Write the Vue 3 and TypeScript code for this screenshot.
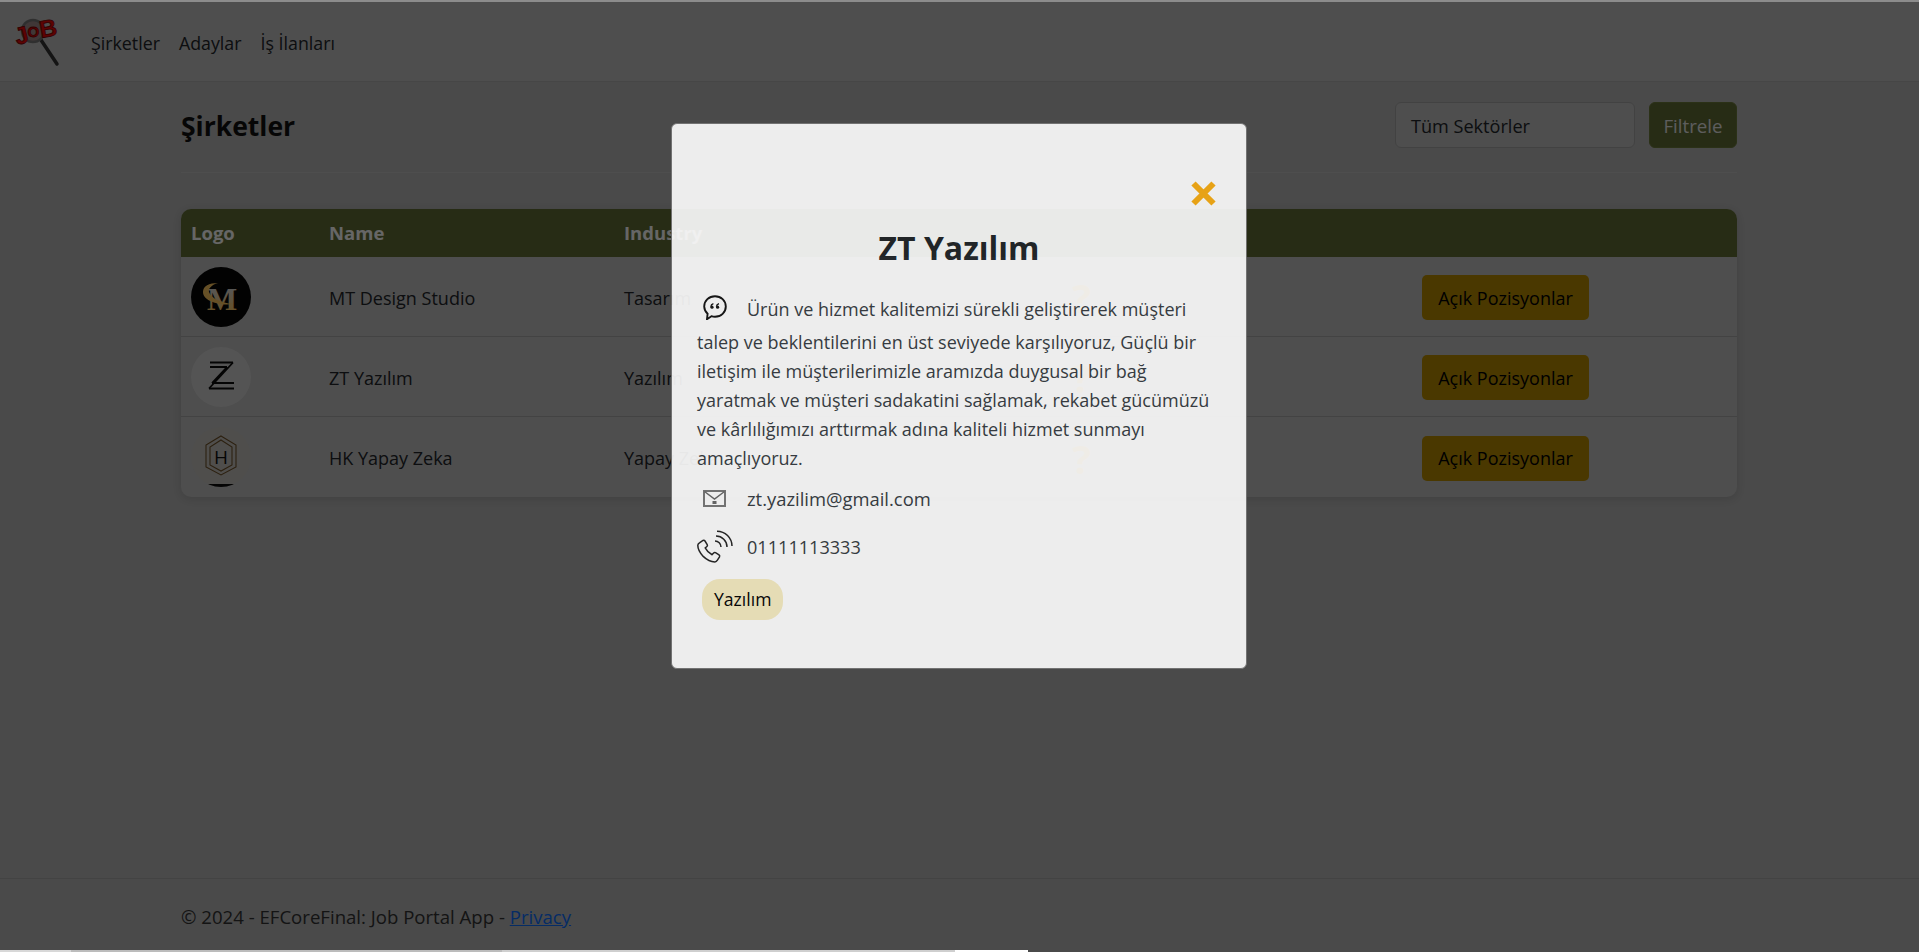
<template>
  <div class="page">
    <nav class="navbar">
      <svg class="brand" viewBox="14 16 48 52" width="48" height="52">
        <line x1="41" y1="41" x2="57" y2="65" stroke="#333" stroke-width="3.5" stroke-linecap="round" />
        <circle cx="33" cy="32" r="11" fill="#a08a8a" stroke="#777" stroke-width="2.5" />
        <text x="17" y="46" class="job" transform="rotate(-14 17 46)">J</text>
        <text x="27.500" y="38" class="job job-o">O</text>
        <text x="41" y="39" class="job" transform="rotate(-10 41 39)">B</text>
      </svg>
      <a v-for="link in links" :key="link" class="nav-link">{{ link }}</a>
    </nav>

    <main class="content">
      <div class="head-row">
        <h2 class="title">Şirketler</h2>
        <div class="filter">
          <div class="select">Tüm Sektörler</div>
          <button class="filter-btn">Filtrele</button>
        </div>
      </div>
      <hr class="rule" />
      <table class="companies">
        <colgroup>
          <col style="width: 138px" />
          <col style="width: 295px" />
          <col style="width: 448px" />
          <col style="width: 350px" />
          <col />
        </colgroup>
        <thead>
          <tr>
            <th>Logo</th>
            <th>Name</th>
            <th>Industry</th>
            <th></th>
            <th></th>
          </tr>
        </thead>
        <tbody>
          <tr v-for="c in companies" :key="c.name">
            <td class="logo-cell">
              <svg v-if="c.logo === 'mt'" class="logo" viewBox="0 0 60 60">
                <defs>
                  <linearGradient id="mt-grad" x1="0" y1="0" x2="0" y2="1">
                    <stop offset="0.2" stop-color="#d8d8d8" />
                    <stop offset="0.85" stop-color="#ffc860" />
                  </linearGradient>
                </defs>
                <circle cx="30" cy="30" r="30" fill="#060606" />
                <text x="31" y="43" text-anchor="middle" class="logo-m">M</text>
                <path d="M27 16c-9 0-15 3-15 9 0 9 16 14 30 12-12-1-22-6-24-12-1-3 2-7 9-9z" fill="#ffc860" />
              </svg>
              <svg v-else-if="c.logo === 'zt'" class="logo" viewBox="0 0 60 60">
                <circle cx="30" cy="30" r="30" fill="#d2d2d2" />
                <g fill="none" stroke="#0c0c0c" stroke-width="1.800">
                  <path d="M19 15.500h23M19 20h17" />
                  <path d="M42 15.500 18 41.500M36 20 21 36" />
                  <path d="M21 36h22M18 41.500h25" />
                </g>
              </svg>
              <svg v-else class="logo" viewBox="0 0 60 60">
                <clipPath id="hk-clip"><circle cx="30" cy="30" r="30" /></clipPath>
                <g clip-path="url(#hk-clip)">
                  <circle cx="30" cy="30" r="30" fill="#c6c3be" />
                  <path d="M30 9 45 18v22L30 48 15 40V18z" fill="none" stroke="#6e5128" stroke-width="1.100" />
                  <path d="M30 13 41 20v18L30 44 19 38V20z" fill="none" stroke="#6e5128" stroke-width="1.100" />
                  <text x="30" y="37" text-anchor="middle" class="logo-h">H</text>
                  <rect x="0" y="57" width="60" height="4" fill="#0c0c0c" />
                </g>
              </svg>
            </td>
            <td>{{ c.name }}</td>
            <td>{{ c.industry }}</td>
            <td class="hint">?</td>
            <td><button class="open-btn">Açık Pozisyonlar</button></td>
          </tr>
        </tbody>
      </table>
    </main>

    <footer class="footer">
      <div class="footer-inner">© 2024 - EFCoreFinal: Job Portal App - <a class="privacy">Privacy</a></div>
    </footer>

    <div class="backdrop">
      <div class="modal">
        <div class="close-row">
          <svg class="close" viewBox="0 0 25 25" width="25" height="25">
            <path d="M2.500 2.500l20 20M22.500 2.500l-20 20" stroke="#f9ac11" stroke-width="6" />
          </svg>
        </div>
        <h2 class="modal-title">{{ selected.name }}</h2>
        <p class="about">
          <svg class="quote" viewBox="0 0 24 25" width="24" height="25">
            <path d="M12 1.200c6 0 10.800 4.500 10.800 10.300S18 21.800 12 21.800c-1.300 0-2.500-.2-3.600-.6L4 24.200l.6-5.500A10.200 10.200 0 0 1 1.200 11.500C1.200 5.700 6 1.200 12 1.200z" fill="none" stroke="#111" stroke-width="1.900" />
            <circle cx="9" cy="12.200" r="1.600" fill="#111" />
            <circle cx="14.600" cy="12.200" r="1.600" fill="#111" />
            <path d="M7.800 11.800C7.900 10.200 8.800 9.200 10.400 8.700M13.400 11.800C13.500 10.200 14.400 9.200 16 8.700" fill="none" stroke="#111" stroke-width="1.300" />
          </svg>{{ selected.about }}
        </p>
        <div class="contact mail">
          <span class="slot">
            <svg viewBox="0 0 23 17" width="23" height="17">
              <rect x="1" y="1" width="21" height="15" fill="none" stroke="#777" stroke-width="2" />
              <path d="M1.500 1.500l10 7.500 10-7.500" fill="none" stroke="#666" stroke-width="1.500" />
              <rect x="9.500" y="11" width="4" height="3" fill="#666" />
            </svg>
          </span>
          <span>{{ selected.email }}</span>
        </div>
        <div class="contact phone">
          <span class="slot">
            <svg viewBox="0 0 36 35" width="36" height="35">
              <path d="M.8 15.300c0-1 1-2 2-2.600L6 10.500c.8-.4 1.500-.2 2 .5l2.200 3.600c.4.700.3 1.400-.3 1.900l-1.700 1.400c1.500 3 3.800 5.300 6.900 6.800l1.500-1.700c.5-.6 1.200-.7 1.900-.3l3.500 2.200c.7.500.9 1.200.5 2l-2.100 3.300c-.6 1-1.500 1.700-2.500 1.700-4 0-8.300-2.200-11.700-5.500C3 23 .8 19.300.8 15.300z" fill="none" stroke="#222" stroke-width="1.500" />
              <path d="M18 11a6 6 0 0 1 6 6M19 6a11 11 0 0 1 11 11M20 1.200A15 15 0 0 1 35 16" fill="none" stroke="#222" stroke-width="1.500" />
            </svg>
          </span>
          <span>{{ selected.phone }}</span>
        </div>
        <span class="tag">{{ selected.industry }}</span>
      </div>
    </div>

    <div class="top-line"></div>
    <div class="bottom-strip">
      <span v-for="s in strip" :key="s.color" :style="{ width: s.width + 'px', background: s.color }"></span>
    </div>
  </div>
</template>

<script setup lang="ts">
type Company = {
  name: string;
  industry: string;
  logo: "mt" | "zt" | "hk";
};

const links: string[] = ["Şirketler", "Adaylar", "İş İlanları"];

const companies: Company[] = [
  { name: "MT Design Studio", industry: "Tasarım", logo: "mt" },
  { name: "ZT Yazılım", industry: "Yazılım", logo: "zt" },
  { name: "HK Yapay Zeka", industry: "Yapay Zeka", logo: "hk" },
];

const selected = {
  name: "ZT Yazılım",
  industry: "Yazılım",
  email: "zt.yazilim@gmail.com",
  phone: "01111113333",
  about:
    "Ürün ve hizmet kalitemizi sürekli geliştirerek müşteri talep ve beklentilerini en üst seviyede karşılıyoruz, Güçlü bir iletişim ile müşterilerimizle aramızda duygusal bir bağ yaratmak ve müşteri sadakatini sağlamak, rekabet gücümüzü ve kârlılığımızı arttırmak adına kaliteli hizmet sunmayı amaçlıyoruz.",
};

const strip = [
  { width: 71, color: "#d8d8d8" },
  { width: 431, color: "#bcbcbc" },
  { width: 453, color: "#cfcfcf" },
  { width: 73, color: "#ffffff" },
];
</script>

<style>
html,
body {
  margin: 0;
  height: 100%;
  overflow: hidden;
}
</style>

<style scoped>
.page {
  position: relative;
  display: flex;
  flex-direction: column;
  height: 952px;
  overflow: hidden;
  background: #b8b8b8;
  color: #212529;
  font-family: "Open Sans", "Noto Sans", sans-serif;
  font-size: 18px;
}

.navbar {
  display: flex;
  align-items: center;
  height: 82px;
  box-sizing: border-box;
  padding-left: 14px;
  background: #c2c2c2;
  border-bottom: 1px solid #b0b0b0;
}

.brand {
  margin-right: 29px;
  overflow: visible;
}

.job {
  font-family: "Liberation Sans", sans-serif;
  font-weight: 700;
  font-size: 24px;
  fill: #e80808;
  stroke: #700;
  stroke-width: 0.8;
}

.job-o {
  font-size: 15px;
}

.nav-link {
  margin-right: 19px;
  padding-top: 4px;
  font-size: 17.800px;
  color: #212529;
}

.content {
  flex: 1;
  box-sizing: border-box;
  width: 1556px;
  margin: 0 182px 0 181px;
  padding-top: 20px;
}

.head-row {
  display: flex;
  justify-content: space-between;
  align-items: center;
  height: 46px;
}

.title {
  margin: 0;
  padding-top: 2px;
  font-size: 26.500px;
  font-weight: 700;
  color: #111;
}

.filter {
  display: flex;
  gap: 14px;
}

.select {
  box-sizing: border-box;
  width: 240px;
  height: 46px;
  padding: 0 15px;
  font-size: 18.100px;
  line-height: 46px;
  background: #c2c2c2;
  border: 1px solid #a6a6a6;
  border-radius: 6px;
}

.filter-btn {
  width: 88px;
  height: 46px;
  padding: 0;
  background: #626e35;
  border: 1px solid #6c7a3a;
  border-radius: 6px;
  color: #e8e8e8;
  font: inherit;
  font-size: 18.700px;
}

.rule {
  margin: 24px 0 36px;
  border: 0;
  border-top: 1px solid #c4c4c4;
}

.companies {
  width: 100%;
  table-layout: fixed;
  border-collapse: separate;
  border-spacing: 0;
  border-radius: 10px;
  overflow: hidden;
  background: #c2c2c2;
  box-shadow: 0 2px 8px rgba(0, 0, 0, 0.12);
}

.companies th {
  height: 48px;
  box-sizing: border-box;
  padding: 0 10px 2px;
  text-align: left;
  font-size: 18.500px;
  font-weight: 700;
  background: #626e35;
  color: #fff;
}

.companies td {
  height: 80px;
  box-sizing: border-box;
  padding: 2px 10px 0;
  border-bottom: 1px solid #a8a8a8;
  color: #212529;
}

.companies td.logo-cell {
  padding-top: 0;
}

.companies tr:last-child td {
  border-bottom: 0;
}

.logo {
  display: block;
  width: 60px;
  height: 60px;
}

.logo-m {
  font-family: "Liberation Serif", serif;
  font-weight: 700;
  font-size: 32px;
  fill: url(#mt-grad);
}

.logo-h {
  font-family: "Open Sans", sans-serif;
  font-size: 19px;
  fill: #111;
}

.companies td.hint {
  font-size: 40px;
  font-weight: 700;
  color: #f9ac11;
}

.open-btn {
  width: 167px;
  height: 45px;
  padding: 0;
  background: #b98c00;
  border: 0;
  border-radius: 5px;
  color: #000;
  font: inherit;
}

.footer {
  height: 74px;
  box-sizing: border-box;
  border-top: 1px solid #a8a8a8;
}

.footer-inner {
  width: 1556px;
  margin: 0 182px 0 181px;
  font-size: 18.600px;
  line-height: 76px;
  color: #333;
}

.privacy {
  color: #0d6efd;
  text-decoration: underline;
}

.backdrop {
  position: absolute;
  inset: 0;
  display: flex;
  justify-content: center;
  align-items: flex-start;
  padding: 123px 1px 0 0;
  background: rgba(0, 0, 0, 0.6);
}

.modal {
  box-sizing: border-box;
  width: 576px;
  height: 546px;
  padding: 57px 25px 0;
  background: #fff;
  border: 1px solid #777;
  border-radius: 6px;
  opacity: 0.9;
}

.close-row {
  display: flex;
  justify-content: flex-end;
  padding-right: 5px;
}

.close {
  display: block;
}

.modal-title {
  margin: 20px 0 0;
  text-align: center;
  font-size: 32px;
  line-height: 44px;
  font-weight: 700;
}

.about {
  margin: 25px 0 0;
  font-size: 18px;
  line-height: 29px;
  color: #343a40;
}

.quote {
  margin: 0 20px 8px 6px;
  vertical-align: middle;
}

.contact {
  display: flex;
  align-items: center;
  color: #343a40;
}

.mail {
  height: 30px;
  margin-top: 10px;
  font-size: 18.400px;
}

.phone {
  height: 36px;
  margin-top: 16px;
  font-size: 18.100px;
}

.slot {
  display: flex;
  width: 50px;
  flex-shrink: 0;
}

.mail .slot svg {
  margin-left: 6px;
}

.tag {
  display: inline-block;
  margin: 14px 0 0 5px;
  padding: 0 12px;
  line-height: 41px;
  font-size: 17.600px;
  background: #f6ecc1;
  border-radius: 18px;
  color: #000;
}

.top-line {
  position: absolute;
  top: 0;
  left: 0;
  right: 0;
  height: 2px;
  background: #8c8c8c;
}

.bottom-strip {
  position: absolute;
  left: 0;
  bottom: 0;
  display: flex;
  height: 2px;
}
</style>
